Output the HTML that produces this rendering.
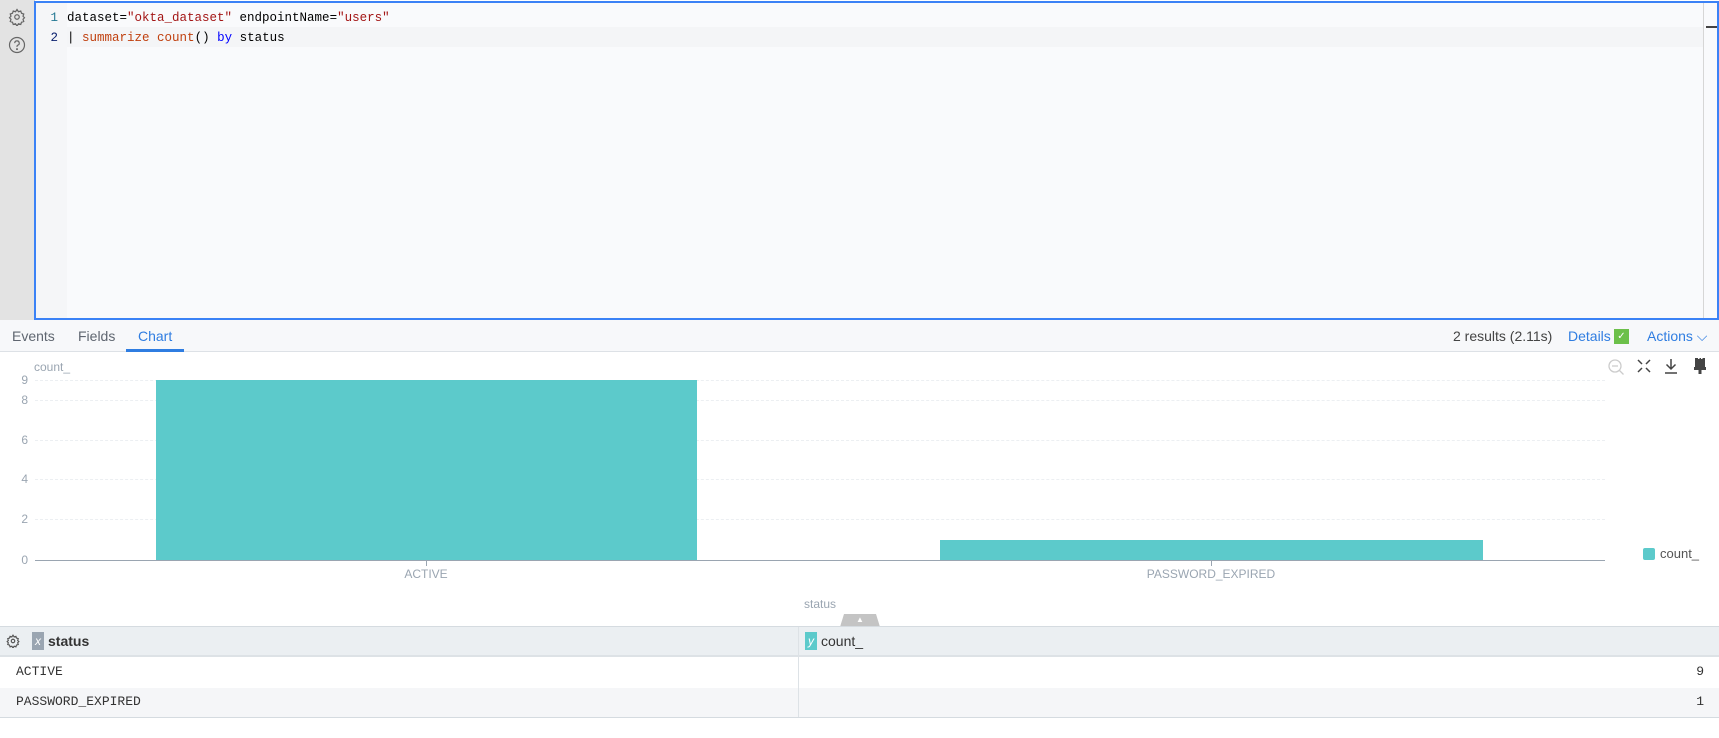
<!DOCTYPE html>
<html><head><meta charset="utf-8"><style>
*{box-sizing:border-box;margin:0;padding:0}
body{width:1719px;height:738px;background:#fff;font-family:"Liberation Sans",sans-serif;position:relative;overflow:hidden}
.abs{position:absolute}
.mono{font-family:"Liberation Mono","DejaVu Sans Mono",monospace}
.gl{position:absolute;left:35px;width:1570px;height:0;border-top:1px dashed #eceff2}
.yl{position:absolute;left:18px;width:10px;text-align:right;font-size:12px;color:#9aa5b1}
</style></head><body>
<div class="abs" style="left:0;top:0;width:35px;height:320px;background:#e3e3e3;border-right:1px solid #d0d0d0"></div>
<svg class="abs" style="left:8px;top:8px" width="18" height="18" viewBox="0 0 24 24" fill="none" stroke="#666" stroke-width="1.6"><circle cx="12" cy="12" r="3"/><path d="M12 2l2 3 3-1 1 3 3 1-1 3 2 2-2 2 1 3-3 1-1 3-3-1-2 3-2-3-3 1-1-3-3-1 1-3-2-2 2-2-1-3 3-1 1-3 3 1z"/></svg>
<svg class="abs" style="left:8px;top:36px" width="18" height="18" viewBox="0 0 24 24" fill="none" stroke="#666" stroke-width="1.6"><circle cx="12" cy="12" r="10"/><path d="M9 9.5a3 3 0 1 1 4 2.8c-.7.3-1 .8-1 1.5v.7"/><circle cx="12" cy="17.5" r=".6" fill="#666"/></svg>
<div class="abs" style="left:34px;top:1px;width:1685px;height:319px;border:2px solid #3b82f6;background:#f9fafc"></div>
<div class="abs" style="left:36px;top:3px;width:31px;height:315px;background:#f5f6f8"></div>
<div class="abs" style="left:67px;top:27px;width:1636px;height:20px;background:#f4f5f7"></div>
<div class="abs" style="left:1703px;top:3px;width:1px;height:315px;background:#d6d6d6"></div>
<div class="abs" style="left:1706px;top:26px;width:11px;height:2px;background:#444"></div>
<div class="abs mono" style="left:36px;top:8px;width:22px;text-align:right;font-size:12.5px;line-height:20px;color:#237893">1</div>
<div class="abs mono" style="left:36px;top:28px;width:22px;text-align:right;font-size:12.5px;line-height:20px;color:#0b216f">2</div>
<div class="abs mono" style="left:67px;top:8px;font-size:12.5px;line-height:20px;color:#000;white-space:pre">dataset=<span style="color:#a31515">"okta_dataset"</span> endpointName=<span style="color:#a31515">"users"</span></div>
<div class="abs mono" style="left:67px;top:28px;font-size:12.5px;line-height:20px;color:#000;white-space:pre">| <span style="color:#c0400f">summarize</span> <span style="color:#c0400f">count</span>() <span style="color:#0000ff">by</span> status</div>
<div class="abs" style="left:0;top:320px;width:1719px;height:32px;background:#f7f8fa;border-bottom:1px solid #dde1e6"></div>
<div class="abs" style="left:12px;top:328px;font-size:14px;color:#5f6670">Events</div>
<div class="abs" style="left:78px;top:328px;font-size:14px;color:#5f6670">Fields</div>
<div class="abs" style="left:138px;top:328px;font-size:14px;color:#2f7de1">Chart</div>
<div class="abs" style="left:126px;top:349px;width:58px;height:3px;background:#2f7de1"></div>
<div class="abs" style="left:1453px;top:328px;font-size:14px;color:#444">2 results (2.11s)</div>
<div class="abs" style="left:1568px;top:328px;font-size:14px;color:#2f7de1">Details</div>
<div class="abs" style="left:1614px;top:329px;width:15px;height:15px;background:#6cc04a;color:#fff;font-size:10px;text-align:center;line-height:15px">✓</div>
<div class="abs" style="left:1647px;top:328px;font-size:14px;color:#2f7de1">Actions ⌵</div>
<div class="abs" style="left:34px;top:360px;font-size:12px;color:#9aa5b1">count_</div>
<div class="gl" style="top:380px"></div><div class="gl" style="top:400px"></div><div class="gl" style="top:440px"></div><div class="gl" style="top:479px"></div><div class="gl" style="top:519px"></div>
<div class="yl" style="top:373px">9</div><div class="yl" style="top:393px">8</div><div class="yl" style="top:433px">6</div><div class="yl" style="top:472px">4</div><div class="yl" style="top:512px">2</div><div class="yl" style="top:553px">0</div>
<div class="abs" style="left:156px;top:380px;width:541px;height:180px;background:#5ccacb"></div>
<div class="abs" style="left:940px;top:540px;width:543px;height:20px;background:#5ccacb"></div>
<div class="abs" style="left:35px;top:560px;width:1570px;height:1px;background:#9aa5b1"></div>
<div class="abs" style="left:426px;top:561px;width:1px;height:5px;background:#9aa5b1"></div>
<div class="abs" style="left:1211px;top:561px;width:1px;height:5px;background:#9aa5b1"></div>
<div class="abs" style="left:376px;top:567px;width:100px;text-align:center;font-size:12px;color:#9aa5b1">ACTIVE</div>
<div class="abs" style="left:1111px;top:567px;width:200px;text-align:center;font-size:12px;color:#9aa5b1">PASSWORD_EXPIRED</div>
<div class="abs" style="left:790px;top:597px;width:60px;text-align:center;font-size:12px;color:#9aa5b1">status</div>
<div class="abs" style="left:1643px;top:548px;width:12px;height:12px;border-radius:2px;background:#5ccacb"></div>
<div class="abs" style="left:1660px;top:546px;font-size:13px;color:#555">count_</div>
<svg class="abs" style="left:1607px;top:358px" width="18" height="18" viewBox="0 0 18 18" fill="none" stroke="#ccc" stroke-width="1.3"><circle cx="8" cy="8" r="6"/><path d="M5 8h6M12.5 12.5l4 4"/></svg>
<svg class="abs" style="left:1636px;top:358px" width="16" height="16" viewBox="0 0 16 16" fill="none" stroke="#444" stroke-width="1.5"><path d="M2 2l4 4M14 2l-4 4M2 14l4-4M14 14l-4-4"/></svg>
<svg class="abs" style="left:1662px;top:357px" width="18" height="18" viewBox="0 0 18 18" fill="none" stroke="#444" stroke-width="1.5"><path d="M9 2v10M4.5 7.5L9 12l4.5-4.5M3 16h12"/></svg>
<svg class="abs" style="left:1692px;top:357px" width="16" height="18" viewBox="0 0 16 18" fill="#444"><rect x="3" y="1" width="10" height="9"/><rect x="6" y="0" width="1.5" height="2" fill="#fff"/><rect x="9" y="0" width="1.5" height="2" fill="#fff"/><rect x="2" y="10" width="12" height="3"/><rect x="6.5" y="13" width="3" height="4"/></svg>
<div class="abs" style="left:840px;top:614px;width:40px;height:13px;background:#c4c4c4;clip-path:polygon(10% 0,90% 0,100% 100%,0 100%)"></div>
<div class="abs" style="left:855px;top:615px;width:10px;text-align:center;font-size:8px;color:#fff">▲</div>
<div class="abs" style="left:0;top:626px;width:1719px;height:31px;background:#ebeff2;border-top:1px solid #d5dbe0;border-bottom:2px solid #dde2e6"></div>
<svg class="abs" style="left:6px;top:634px" width="14" height="14" viewBox="0 0 24 24" fill="none" stroke="#555" stroke-width="2"><circle cx="12" cy="12" r="3"/><path d="M12 2l2 3 3-1 1 3 3 1-1 3 2 2-2 2 1 3-3 1-1 3-3-1-2 3-2-3-3 1-1-3-3-1 1-3-2-2 2-2-1-3 3-1 1-3 3 1z"/></svg>
<div class="abs" style="left:32px;top:632px;width:12px;height:18px;background:#9aa5b1;color:#fff;font-size:12px;font-style:italic;text-align:center;line-height:18px">x</div>
<div class="abs" style="left:48px;top:633px;font-size:14px;font-weight:bold;color:#333">status</div>
<div class="abs" style="left:805px;top:632px;width:12px;height:18px;background:#5ccacb;color:#fff;font-size:12px;font-style:italic;text-align:center;line-height:18px">y</div>
<div class="abs" style="left:821px;top:633px;font-size:14px;color:#333">count_</div>
<div class="abs" style="left:0;top:688px;width:1719px;height:29px;background:#f5f6f8"></div>
<div class="abs" style="left:798px;top:627px;width:1px;height:91px;background:#dde2e6"></div>
<div class="abs" style="left:0;top:717px;width:1719px;height:1px;background:#d5dbe0"></div>
<div class="abs mono" style="left:16px;top:664px;font-size:13px;color:#333">ACTIVE</div>
<div class="abs mono" style="left:16px;top:694px;font-size:13px;color:#333">PASSWORD_EXPIRED</div>
<div class="abs mono" style="left:1690px;top:664px;width:14px;text-align:right;font-size:13px;color:#333">9</div>
<div class="abs mono" style="left:1690px;top:694px;width:14px;text-align:right;font-size:13px;color:#333">1</div>
</body></html>
